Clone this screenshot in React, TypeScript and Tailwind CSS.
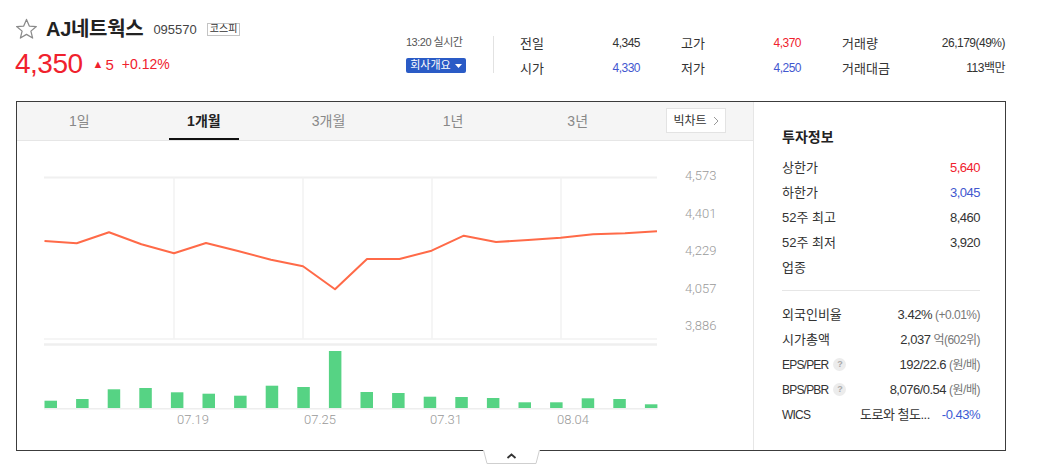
import React from 'react';

const LINE: [number, number][] = [
    [44.5, 241], [76.7, 243.3], [109, 232.3], [141.4, 244.3], [174, 253.3],
    [206, 243], [238, 251], [271, 259.7], [303, 266.3], [335, 289.3],
    [367, 259], [399.5, 259], [431.6, 250.7], [463.8, 235.7], [496, 242],
    [528, 240], [560.6, 237.7], [593, 234.3], [625, 233.3], [657, 231.3],
];

const BAR_TOPS = [400.7, 399, 389.3, 388, 392.3, 393.7, 395.7, 385.7, 387, 351, 392, 393, 396.7, 397, 398, 402.3, 402.3, 398.3, 399, 404.3];

const Y_LABELS = [
    { v: '4,573', y: 175 },
    { v: '4,401', y: 213 },
    { v: '4,229', y: 250 },
    { v: '4,057', y: 288 },
    { v: '3,886', y: 325 },
];

const DATES = [
    { v: '07.19', x: 193 },
    { v: '07.25', x: 320 },
    { v: '07.31', x: 446 },
    { v: '08.04', x: 573 },
];

const TABS = ['1일', '1개월', '3개월', '1년', '3년'];

const StarIcon = () => (
    <svg width="23" height="22" viewBox="0 0 24 23" className="-ml-px">
        <polygon
            points="12,1.5 14.9,8.4 22.3,8.9 16.6,13.7 18.4,21 12,17.1 5.6,21 7.4,13.7 1.7,8.9 9.1,8.4"
            fill="none"
            stroke="#8a8a8a"
            strokeWidth="1.3"
            strokeLinejoin="round"
        />
    </svg>
);

const Help = () => (
    <span className="ml-[5px] inline-flex h-[13px] w-[13px] items-center justify-center rounded-full bg-[#ececec] text-[9px] font-bold leading-none text-[#aaa]">?</span>
);

const Chart: React.FC = () => (
    <svg width="736" height="309" viewBox="17 141 736 309" className="block">
        {/* grid */}
        <line x1="44" y1="177.5" x2="657" y2="177.5" stroke="#f0f0f0" strokeWidth="2" />
        {[174, 303, 432, 561].map(x => (
            <line key={x} x1={x} y1="177" x2={x} y2="339" stroke="#f2f2f2" strokeWidth="1.5" />
        ))}
        <line x1="44" y1="339" x2="657" y2="339" stroke="#f2f2f2" strokeWidth="1.5" />
        <line x1="44" y1="344.5" x2="657" y2="344.5" stroke="#efefef" strokeWidth="2.5" />
        {/* price line */}
        <polyline
            points={LINE.map(p => p.join(',')).join(' ')}
            fill="none"
            stroke="#ff6a48"
            strokeWidth="2"
            strokeLinejoin="round"
        />
        {Y_LABELS.map(l => (
            <text key={l.v} x="685" y={l.y + 4.5} fontSize="13" className="fill-[#9a9a9a] font-['Roboto',sans-serif] font-light">{l.v}</text>
        ))}
        {/* volume */}
        <line x1="44" y1="408.8" x2="657.5" y2="408.8" stroke="#eeeeee" strokeWidth="1.5" />
        {BAR_TOPS.map((top, i) => (
            <rect key={i} x={44.5 + i * 31.6} y={top} width="12.5" height={408 - top} fill="#56d384" />
        ))}
        {DATES.map(d => (
            <text key={d.v} x={d.x} y="423.5" fontSize="13" textAnchor="middle" className="fill-[#999] font-['Roboto',sans-serif] font-light">{d.v}</text>
        ))}
    </svg>
);

const InfoRow: React.FC<{ label: React.ReactNode; children: React.ReactNode }> = ({ label, children }) => (
    <div className="flex h-[25px] items-center justify-between text-[13px] text-[#333]">
        <span className="flex items-center">{label}</span>
        <span className="flex items-center tracking-[-0.5px]">{children}</span>
    </div>
);

const App: React.FC = () => {
    return (
        <div className="h-[476px] w-[1051px] overflow-hidden bg-white font-['Liberation_Sans','Noto_Sans_CJK_KR',sans-serif] text-[#333]">
            <div className="ml-4 w-[990px]">
                {/* header */}
                <div className="flex h-[101px] items-start">
                    <div className="w-[390px] pt-[17px]">
                        <div className="flex h-[24px] items-center">
                            <StarIcon />
                            <span className="ml-[8px] text-[20px] font-bold leading-none tracking-[-0.3px] text-[#222]">AJ네트웍스</span>
                            <span className="ml-[10px] text-[13px] leading-none text-[#444]">095570</span>
                            <span className="ml-[10px] flex h-[13px] items-center border border-[#c4c4c4] px-[2px] text-[10px] leading-none text-[#333]">코스피</span>
                        </div>
                        <div className="mt-[8px] flex h-[30px] items-center text-[#f0212d]">
                            <span className="-ml-px text-[28px] leading-none tracking-[-0.5px]">4,350</span>
                            <span className="ml-[10px] text-[11px] leading-none">▲</span>
                            <span className="ml-[2px] text-[15px] leading-none">5</span>
                            <span className="ml-[8px] text-[14px] leading-none">+0.12%</span>
                        </div>
                    </div>
                    <div className="w-[61px] pt-[35px]">
                        <div className="h-[14px] text-[11px] leading-[14px] tracking-[-0.5px] text-[#555]">13:20 실시간</div>
                        <div className="mt-[9px] flex h-[15px] w-[60px] items-center justify-center rounded-[2px] bg-[#2a5bc6] text-[11px] leading-none text-white">
                            회사개요
                            <svg width="7" height="4" viewBox="0 0 7 4" className="ml-[4px]"><polygon points="0,0 7,0 3.5,4" fill="#fff" /></svg>
                        </div>
                    </div>
                    <div className="ml-[26px] mt-[36px] h-[37px] w-px bg-[#e2e2e2]" />
                    <div className="ml-[26px] pt-[31px] text-[13px]">
                        <div className="flex h-[25px] items-center">
                            <div className="flex w-[120px] justify-between"><span>전일</span><span className="text-[12px] tracking-[-0.5px]">4,345</span></div>
                            <div className="ml-[41px] flex w-[120px] justify-between"><span>고가</span><span className="text-[12px] tracking-[-0.5px] text-[#f0212d]">4,370</span></div>
                            <div className="ml-[41px] flex w-[163px] justify-between"><span>거래량</span><span className="text-[12px] tracking-[-0.5px]">26,179(49%)</span></div>
                        </div>
                        <div className="flex h-[25px] items-center">
                            <div className="flex w-[120px] justify-between"><span>시가</span><span className="text-[12px] tracking-[-0.5px] text-[#4257cf]">4,330</span></div>
                            <div className="ml-[41px] flex w-[120px] justify-between"><span>저가</span><span className="text-[12px] tracking-[-0.5px] text-[#4257cf]">4,250</span></div>
                            <div className="ml-[41px] flex w-[163px] justify-between"><span>거래대금</span><span className="text-[12px] tracking-[-0.5px]">113백만</span></div>
                        </div>
                    </div>
                </div>

                {/* main box */}
                <div className="flex h-[350px] border border-[#3c3c3c]">
                    <div className="flex w-[736px] flex-col">
                        <div className="flex h-[39px] border-b border-[#e6e6e6] bg-[#f5f5f5]">
                            <div className="grid w-[623px] grid-cols-5">
                                {TABS.map((t, i) => (
                                    <div key={t} className="flex items-center justify-center">
                                        <span className={`flex h-full items-center justify-center text-[14px] ${i === 1 ? 'w-[70px] border-b-2 border-[#111] pt-[2px] font-bold text-[#222]' : 'text-[#888]'}`}>{t}</span>
                                    </div>
                                ))}
                            </div>
                            <div className="ml-[26px] mt-[6px] flex h-[25px] w-[60px] items-center justify-center border border-[#e3e3e3] bg-white text-[12px] text-[#333]">
                                빅차트
                                <svg width="6" height="10" viewBox="0 0 6 10" className="ml-[6px]"><polyline points="1,1 5,5 1,9" fill="none" stroke="#999" strokeWidth="1" /></svg>
                            </div>
                        </div>
                        <Chart />
                    </div>
                    <div className="flex-1 border-l border-[#e6e6e6] pl-[28px] pr-[25px] pt-[25px]">
                        <div className="mb-[8px] h-[20px] text-[14px] font-bold leading-[20px] text-[#222]">투자정보</div>
                        <InfoRow label="상한가"><span className="text-[#f0212d]">5,640</span></InfoRow>
                        <InfoRow label="하한가"><span className="text-[#4257cf]">3,045</span></InfoRow>
                        <InfoRow label="52주 최고">8,460</InfoRow>
                        <InfoRow label="52주 최저">3,920</InfoRow>
                        <InfoRow label="업종"><span /></InfoRow>
                        <div className="mt-[10px] border-t border-[#e6e6e6] pt-[11px]">
                            <InfoRow label="외국인비율">3.42%<span className="ml-[3px] text-[12px] text-[#777]">(+0.01%)</span></InfoRow>
                            <InfoRow label="시가총액">2,037<span className="ml-[3px] text-[12px] text-[#777]">억(602위)</span></InfoRow>
                            <InfoRow label={<><span className="text-[12px] tracking-[-0.8px]">EPS/PER</span><Help /></>}>192/22.6<span className="ml-[3px] text-[12px] text-[#777]">(원/배)</span></InfoRow>
                            <InfoRow label={<><span className="text-[12px] tracking-[-0.8px]">BPS/PBR</span><Help /></>}>8,076/0.54<span className="ml-[3px] text-[12px] text-[#777]">(원/배)</span></InfoRow>
                            <InfoRow label={<span className="text-[12px] tracking-[-0.8px]">WICS</span>}>도로와 철도...<span className="ml-[12px] text-[#3c5bd4]">-0.43%</span></InfoRow>
                        </div>
                    </div>
                </div>

                {/* fold toggle */}
                <div className="-mt-px ml-[467px] h-[15px] w-[57px]">
                    <svg width="57" height="15" viewBox="0 0 57 15">
                        <polygon points="0.5,0 56.5,0 53,14 4,14" fill="#fff" />
                        <polyline points="0.5,0 4,13.5 53,13.5 56.5,0" fill="none" stroke="#cfcfcf" strokeWidth="1" />
                        <polyline points="24.5,8 28.5,4.5 32.5,8" fill="none" stroke="#333" strokeWidth="1.8" />
                    </svg>
                </div>
            </div>
        </div>
    );
};

export default App;
